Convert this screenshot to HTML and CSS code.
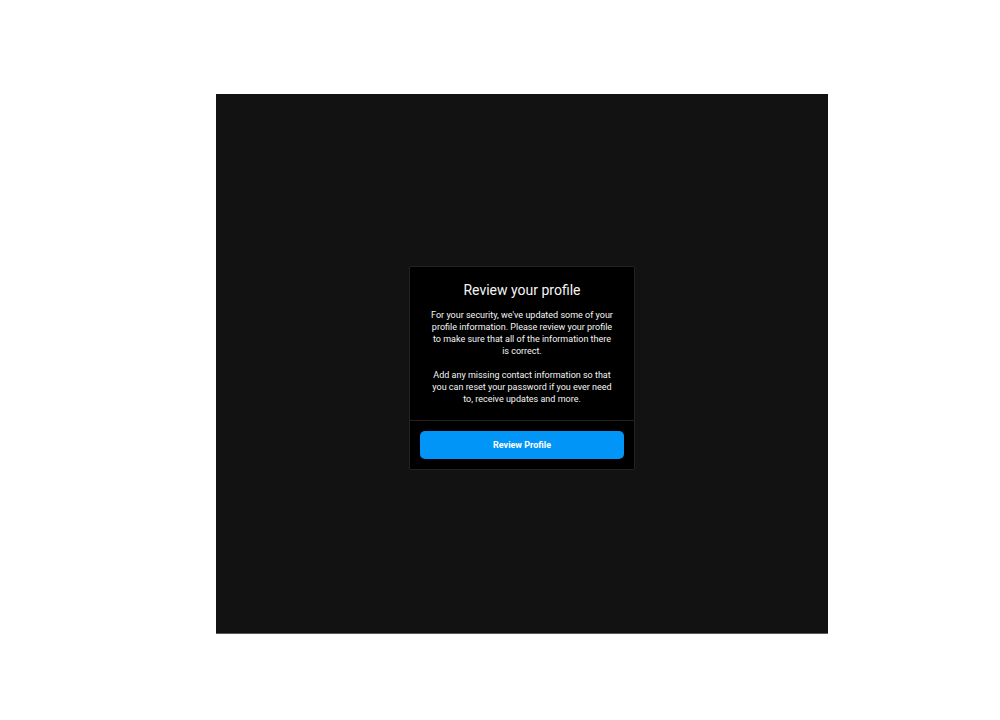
FILE: index.html
```html
<!DOCTYPE html>
<html lang="en">
<head>
  <meta charset="UTF-8" />
  <meta name="viewport" content="width=device-width, initial-scale=1.0"/>
  <title>Review your profile</title>
  <link rel="stylesheet" href="styles.css">
</head>
<body>

  <main class="screen">
    <section class="card" aria-labelledby="card-title">
      <div class="card-body">
        <h1 id="card-title">Review your profile</h1>
        <p>For your security, we've updated some of your profile information. Please review your profile to make sure that all of the information there is correct.</p>
        <p>Add any missing contact information so that you can reset your password if you ever need to, receive updates and more.</p>
      </div>
      <div class="card-footer">
        <button type="button" class="review-btn">Review Profile</button>
      </div>
    </section>
  </main>

</body>
</html>
```

FILE: styles.css
```css
:root {
  --screen-bg: #121212;
  --card-bg: #000;
  --line-color: #222;
  --text-color: #f5f5f5;
  --button-bg: #0095f6;
}

* {
  box-sizing: border-box;
}

body {
  font-family: Roboto, sans-serif;
  background-color: white;
  color: var(--text-color);
  min-height: 100vh;
  margin: 0;
  padding: 13vh 17.2% 11.9vh 21.6%;
  display: flex;
}

.screen {
  flex: 1;
  display: flex;
  justify-content: center;
  align-items: center;
  background-color: var(--screen-bg);
  border-bottom: 1px solid #5c595b;
  padding: 20px 10px 10px;
}

.card {
  width: 100%;
  max-width: 226px;
  background-color: var(--card-bg);
  border: 1px solid var(--line-color);
  border-radius: 2px;
  text-align: center;
}

.card-body {
  padding: 15px 20px;
}

h1 {
  font-size: 14px;
  line-height: 16px;
  font-weight: normal;
  margin: 0 0 11px;
}

p {
  font-size: 9px;
  line-height: 12px;
  margin: 0 0 12px;
}

p:last-child {
  margin-bottom: 0;
}

.card-footer {
  border-top: 1px solid var(--line-color);
  padding: 10px;
}

.review-btn {
  display: block;
  width: 100%;
  height: 28px;
  padding: 0;
  border: none;
  border-radius: 5px;
  background-color: var(--button-bg);
  color: white;
  font-family: inherit;
  font-size: 9px;
  font-weight: bold;
  cursor: pointer;
}

.review-btn:hover {
  background-color: #1877f2;
}
```
